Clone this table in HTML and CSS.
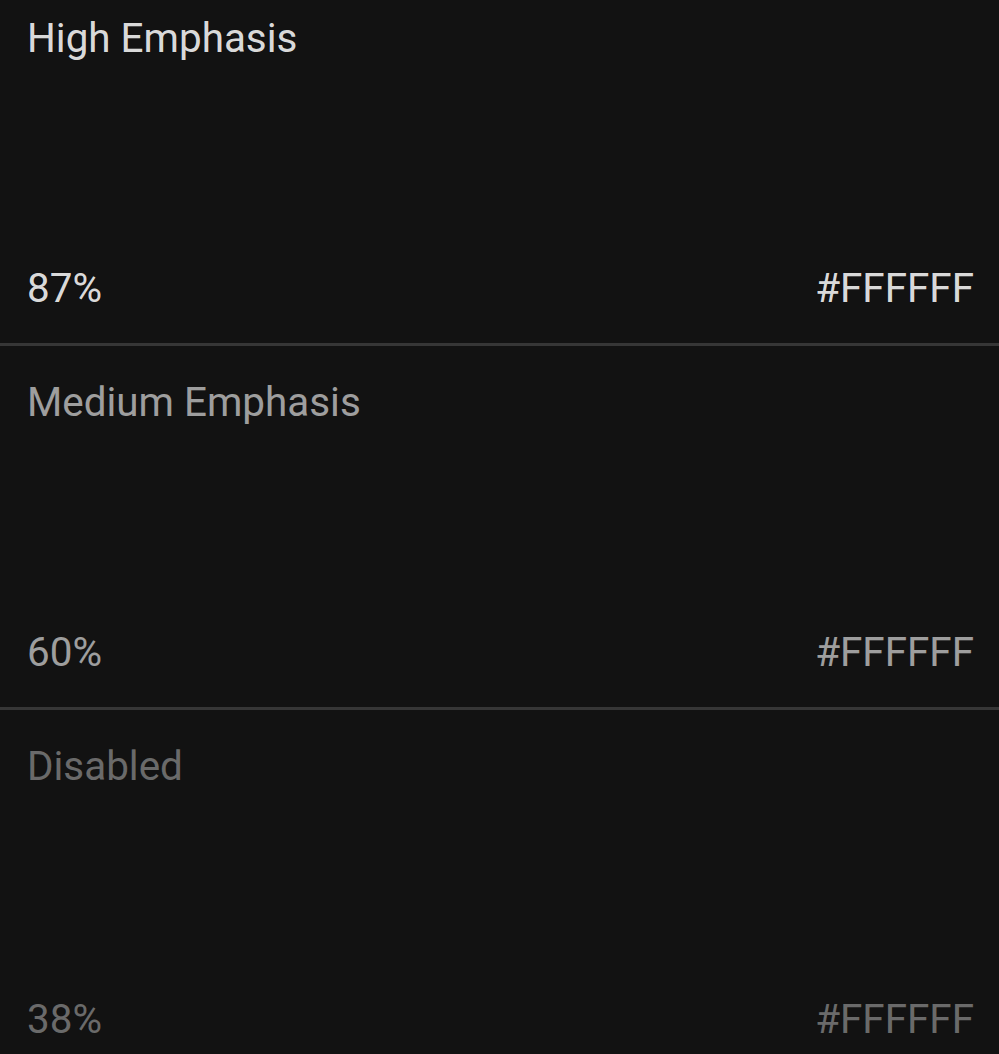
FILE: index.html
```html
<!DOCTYPE html>
<html>
<head>
<meta charset="utf-8">
<link rel="stylesheet" href="styles.css">
</head>
<body>
<div class="list">
  <section class="item high">
    <div class="title">High Emphasis</div>
    <div class="meta"><span>87%</span><span>#FFFFFF</span></div>
  </section>
  <section class="item medium">
    <div class="title">Medium Emphasis</div>
    <div class="meta"><span>60%</span><span>#FFFFFF</span></div>
  </section>
  <section class="item disabled">
    <div class="title">Disabled</div>
    <div class="meta"><span>38%</span><span>#FFFFFF</span></div>
  </section>
</div>
</body>
</html>
```
FILE: styles.css
```css
html, body {
  margin: 0;
  padding: 0;
  background: #121212;
  height: 100%;
  overflow: hidden;
}
body {
  font-family: Roboto, "Noto Sans", sans-serif;
  font-size: 40.4px;
  line-height: 48px;
}
.list {
  display: flex;
  flex-direction: column;
  margin-top: -18px;
}
.item {
  height: 364px;
  box-sizing: border-box;
  padding: 33px 25px 30px 27px;
  display: flex;
  flex-direction: column;
  justify-content: space-between;
  border-bottom: 3px solid #363636;
  flex-shrink: 0;
}
.item:last-child {
  border-bottom: none;
}
.meta {
  display: flex;
  justify-content: space-between;
}
.high { color: rgba(255,255,255,0.87); }
.medium { color: rgba(255,255,255,0.60); }
.disabled { color: rgba(255,255,255,0.38); }
```
